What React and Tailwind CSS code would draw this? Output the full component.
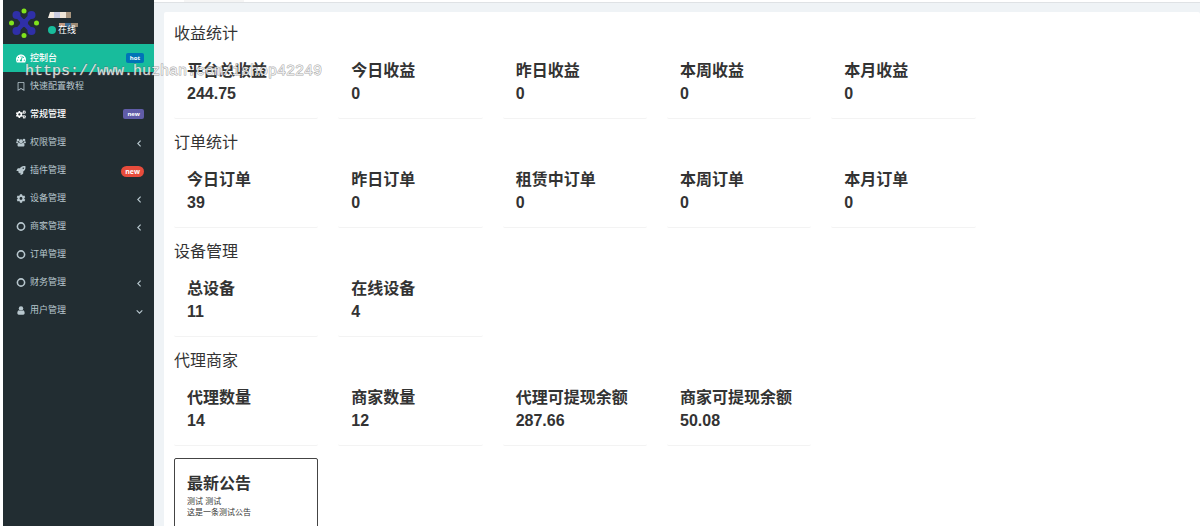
import React, { useState } from "react";
import clsx from "clsx";
import {
  FaTachometerAlt,
  FaRegBookmark,
  FaCogs,
  FaRocket,
  FaCog,
} from "react-icons/fa";

function CircleIcon({ className }) {
  return (
    <svg viewBox="0 0 16 16" className={className} width="1em" height="1em" aria-hidden="true">
      <circle cx="8" cy="8" r="6.400" fill="none" stroke="currentColor" strokeWidth="2.800" />
    </svg>
  );
}

function GroupIcon({ className }) {
  return (
    <svg viewBox="0 0 20 16" className={className} width="1em" height="1em" fill="currentColor" aria-hidden="true">
      <circle cx="4" cy="3" r="2.700" />
      <circle cx="16" cy="3" r="2.700" />
      <circle cx="10" cy="5.500" r="3.800" />
      <path d="M1.500 5.500C0 6.500 0 9.500 1.500 9.500H4.500C5 8.500 5 7 4.500 6zM18.500 5.500C20 6.500 20 9.500 18.500 9.500H15.500C15 8.500 15 7 15.500 6z" />
      <path d="M6 8.500C4 8.500 3 11 3 13.500C3 15 4 16 5.500 16H14.500C16 16 17 15 17 13.500C17 11 16 8.500 14 8.500C12 10.500 8 10.500 6 8.500z" />
    </svg>
  );
}

function UserIcon({ className }) {
  return (
    <svg viewBox="0 0 16 16" className={className} width="1em" height="1em" fill="currentColor" aria-hidden="true">
      <circle cx="8" cy="4.500" r="4" />
      <path d="M4.500 7.500C2.500 7.500 1.500 10 1.500 12.500C1.500 14.500 2.500 15.500 4 15.500H12C13.500 15.500 14.500 14.500 14.500 12.500C14.500 10 13.500 7.500 11.500 7.500C9.500 9.500 6.500 9.500 4.500 7.500z" />
    </svg>
  );
}

function Arrow({ down }) {
  return (
    <svg
      viewBox="0 0 8 8"
      className={clsx("mt-[2px] size-[9px]", down && "-rotate-90")}
      fill="none"
      stroke="currentColor"
      strokeWidth="1"
      aria-hidden="true"
    >
      <path d="M5 1.500L2.500 4L5 6.500" />
    </svg>
  );
}

const menu = [
  { title: "控制台", icon: FaTachometerAlt, badge: "hot", badgeClass: "rounded-xs bg-[#0073b7]" },
  { title: "快速配置教程", icon: FaRegBookmark },
  { title: "常规管理", icon: FaCogs, badge: "new", badgeClass: "rounded-xs bg-[#605ca8]", strong: true },
  { title: "权限管理", icon: GroupIcon, arrow: "left" },
  { title: "插件管理", icon: FaRocket, badge: "new", badgeClass: "mt-[2px] rounded-full bg-[#e74c3c] px-1 text-[7px] leading-[11px]" },
  { title: "设备管理", icon: FaCog, arrow: "left" },
  { title: "商家管理", icon: CircleIcon, arrow: "left" },
  { title: "订单管理", icon: CircleIcon },
  { title: "财务管理", icon: CircleIcon, arrow: "left" },
  { title: "用户管理", icon: UserIcon, arrow: "down" },
];

const sections = [
  {
    title: "收益统计",
    items: [
      ["平台总收益", "244.75"],
      ["今日收益", "0"],
      ["昨日收益", "0"],
      ["本周收益", "0"],
      ["本月收益", "0"],
    ],
  },
  {
    title: "订单统计",
    items: [
      ["今日订单", "39"],
      ["昨日订单", "0"],
      ["租赁中订单", "0"],
      ["本周订单", "0"],
      ["本月订单", "0"],
    ],
  },
  {
    title: "设备管理",
    items: [
      ["总设备", "11"],
      ["在线设备", "4"],
    ],
  },
  {
    title: "代理商家",
    items: [
      ["代理数量", "14"],
      ["商家数量", "12"],
      ["代理可提现余额", "287.66"],
      ["商家可提现余额", "50.08"],
    ],
  },
];

function Logo() {
  return (
    <svg viewBox="0 0 32 32" className="size-8 shrink-0" aria-hidden="true">
      <g stroke="#2f2fa8" strokeWidth="4.500" strokeLinecap="round">
        <path d="M9 8.500L23 23.500M23 8.500L9 23.500" />
      </g>
      <g fill="#2f2fa8">
        <circle cx="16" cy="16" r="4" />
        <circle cx="8.500" cy="8" r="4" />
        <circle cx="23.500" cy="8" r="4" />
        <circle cx="8.500" cy="24" r="4" />
        <circle cx="23.500" cy="24" r="4" />
      </g>
      <g fill="#80e31c">
        <circle cx="16" cy="4" r="2.500" />
        <circle cx="28.500" cy="16" r="2.500" />
        <circle cx="16" cy="28.500" r="2.500" />
        <circle cx="3.500" cy="16" r="2.500" />
      </g>
    </svg>
  );
}

function UserPanel() {
  return (
    <div className="flex h-11 items-center gap-2 pt-[2px] pl-[5px]">
      <Logo />
      <div className="pt-[2px] text-[9px] leading-3 text-white">
        <svg viewBox="0 0 24 6" className="h-[6px] w-6" aria-hidden="true">
          <path d="M2 0H6V6H0z" fill="#f3eadf" />
          <path d="M6 0H12V6H6z" fill="#c9cbe0" />
          <path d="M12 0H18V6H12z" fill="#f0e6d8" />
          <path d="M18 0H23V6H18z" fill="#a8957e" />
        </svg>
        <div className="relative mt-[6px] flex items-center gap-[2px]">
          <svg viewBox="0 0 19 4" className="absolute -top-px left-[11px] h-1 w-[19px]" aria-hidden="true">
            <path d="M0 0H6V4H0z" fill="#c39a80" />
            <path d="M6 0H12V4H6z" fill="#3f6c92" />
            <path d="M12 0H19V4H12z" fill="#9c8a75" />
          </svg>
          <span className="size-2 rounded-full bg-[#18bc9c]"></span>
          <span className="relative">在线</span>
        </div>
      </div>
    </div>
  );
}

function MenuItem({ item, active, onClick }) {
  const Icon = item.icon;
  return (
    <a
      href="#"
      onClick={onClick}
      className={clsx(
        "flex h-7 items-center pr-[10px] pl-[13px] text-[9px]",
        active && "bg-[#18bc9c]",
        active || item.strong ? "font-medium text-white" : "text-[#b8c7ce]"
      )}
    >
      <Icon className="mr-1 w-[10px] text-[9px]" />
      <span className="flex-1">{item.title}</span>
      {item.badge && (
        <span
          className={clsx(
            "px-1 text-[6px] leading-[10px] font-bold text-white",
            item.badgeClass
          )}
        >
          {item.badge}
        </span>
      )}
      {item.arrow && <Arrow down={item.arrow === "down"} />}
    </a>
  );
}

function Stat({ label, value }) {
  return (
    <div className="rounded-xs border-b border-[#f3f3f3] px-[13px] py-[13px] font-bold whitespace-nowrap">
      <h4 className="leading-6">{label}</h4>
      <p className="leading-[22px]">{value}</p>
    </div>
  );
}

export default function App() {
  const [current, setCurrent] = useState("控制台");

  function handleSelect(e, title) {
    e.preventDefault();
    setCurrent(title);
  }

  return (
    <div className="relative flex h-screen overflow-hidden bg-white pl-[3px] font-['Liberation_Sans','Noto_Sans_CJK_SC',sans-serif] text-base text-[#333]">
      <aside className="w-[151px] shrink-0 bg-[#222d32] font-['Open_Sans','Noto_Sans_CJK_SC',sans-serif]">
        <UserPanel />
        <nav>
          {menu.map((item) => (
            <MenuItem
              key={item.title}
              item={item}
              active={item.title === current}
              onClick={(e) => handleSelect(e, item.title)}
            />
          ))}
        </nav>
      </aside>

      <div className="min-w-0 flex-1 bg-[#eff3f6]">
        <header className="h-[3px] border-b border-[#dfe2e5] bg-white pl-[30px]">
          <div className="h-[2px] w-[60px] bg-[#f5f5f5]"></div>
        </header>
        <main className="mt-[9px] ml-[10px] min-h-screen rounded-xs bg-white pt-[10px] pr-[60px] pl-[10px]">
          {sections.map((section) => (
            <section key={section.title} className="mb-3">
              <h3 className="leading-6">{section.title}</h3>
              <div className="grid grid-cols-6 gap-5">
                {section.items.map(([label, value]) => (
                  <Stat key={label} label={label} value={value} />
                ))}
              </div>
            </section>
          ))}

          <div className="grid grid-cols-6 gap-5">
            <div className="rounded-xs border border-[#444] px-3 pt-[13px] pb-10">
              <h4 className="leading-6 font-bold">最新公告</h4>
              <p className="text-[8px] leading-[11px]">测试 测试</p>
              <p className="text-[8px] leading-[11px]">这是一条测试公告</p>
            </div>
          </div>
        </main>
      </div>

      <div className="pointer-events-none absolute top-[62px] left-[25px] font-['Liberation_Mono',monospace] text-[15px] leading-5 text-white/80 [-webkit-text-stroke:1px_#66666699] [paint-order:stroke]">
        https://www.huzhan.com/ishop42249
      </div>
    </div>
  );
}
